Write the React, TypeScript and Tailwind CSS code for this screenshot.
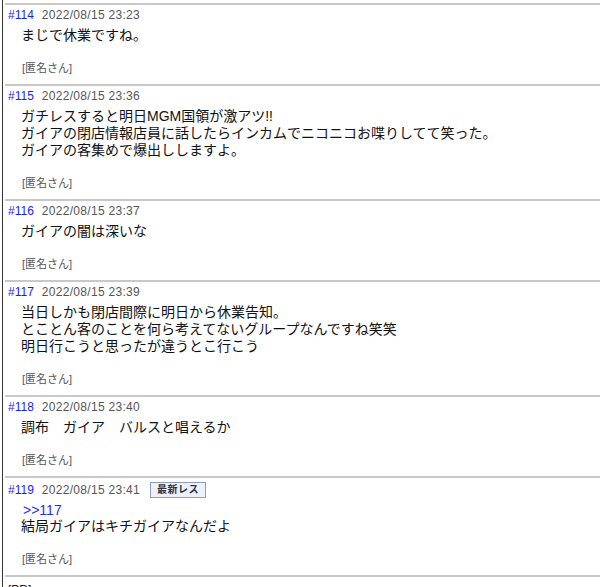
import React from 'react';

interface Post {
    no: number;
    date: string;
    lines: string[];
    anchor?: string;
    latest?: boolean;
}

const posts: Post[] = [
    { no: 114, date: '2022/08/15 23:23', lines: ['まじで休業ですね。'] },
    {
        no: 115,
        date: '2022/08/15 23:36',
        lines: [
            'ガチレスすると明日MGM国領が激アツ!!',
            'ガイアの閉店情報店員に話したらインカムでニコニコお喋りしてて笑った。',
            'ガイアの客集めで爆出ししますよ。',
        ],
    },
    { no: 116, date: '2022/08/15 23:37', lines: ['ガイアの闇は深いな'] },
    {
        no: 117,
        date: '2022/08/15 23:39',
        lines: [
            '当日しかも閉店間際に明日から休業告知。',
            'とことん客のことを何ら考えてないグループなんですね笑笑',
            '明日行こうと思ったが違うとこ行こう',
        ],
    },
    { no: 118, date: '2022/08/15 23:40', lines: ['調布\u3000ガイア\u3000バルスと唱えるか'] },
    { no: 119, date: '2022/08/15 23:41', anchor: '>>117', lines: ['結局ガイアはキチガイアなんだよ'], latest: true },
];

const jp = "font-['Liberation_Sans','Noto_Sans_CJK_JP',sans-serif]";

const PostItem: React.FC<{ post: Post }> = ({ post }) => (
    <div className="border-t-2 border-[#c8c8c8] pt-[2px] pb-[9px]">
        <div
            className={`flex items-center pl-[3px] text-[12px] leading-[16px] ${post.latest ? 'h-[18px] pt-[1px]' : 'h-[16px]'}`}
        >
            <span className="text-[#1a1aff]">#{post.no}</span>
            <span className="ml-[8px] text-[#555] tracking-[0.3px]">{post.date}</span>
            {post.latest && (
                <span className="ml-[10px] h-[16px] w-[56px] flex items-center justify-center border border-[#8a9cc0] bg-[#eef1fb] text-[#334] text-[10px] font-bold tracking-[0.5px]">
                    最新レス
                </span>
            )}
        </div>
        <div className="mt-[4px] pl-[16px] text-[14px] leading-[17px] text-[#111]">
            {post.anchor && <div className="pl-[2px] leading-[16px] text-[#2a2aff]">{post.anchor}</div>}
            {post.lines.map((line, i) => (
                <div key={i} className="whitespace-pre">{line}</div>
            ))}
        </div>
        <div className="mt-[17px] pl-[17px] text-[11px] leading-[14px] text-[#555]">[匿名さん]</div>
    </div>
);

export default function App() {
    return (
        <div className={`min-h-screen bg-white pl-[2px] ${jp}`}>
            <div className="border-l border-[#333] pl-[2px] pt-[3px] min-h-screen">
                {posts.map((p) => (
                    <PostItem key={p.no} post={p} />
                ))}
                <div className="border-t-2 border-[#c8c8c8] pt-[5px] pl-[3px] text-[12px] leading-[16px] text-[#222]">
                    [PR]
                </div>
            </div>
        </div>
    );
}
